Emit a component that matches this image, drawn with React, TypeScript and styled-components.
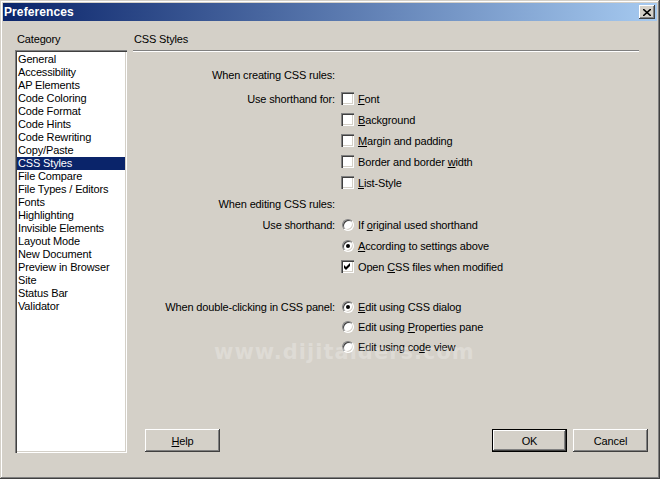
import styled, { createGlobalStyle } from "styled-components";

const GlobalStyle = createGlobalStyle`
    html, body {
        margin: 0;
        padding: 0;
        background: #d4d0c8;
    }
    * {
        box-sizing: border-box;
    }
`;

const categories = [
    "General",
    "Accessibility",
    "AP Elements",
    "Code Coloring",
    "Code Format",
    "Code Hints",
    "Code Rewriting",
    "Copy/Paste",
    "CSS Styles",
    "File Compare",
    "File Types / Editors",
    "Fonts",
    "Highlighting",
    "Invisible Elements",
    "Layout Mode",
    "New Document",
    "Preview in Browser",
    "Site",
    "Status Bar",
    "Validator",
];

const Check = ({ checked = false }: { checked?: boolean }) => (
    <CheckBox>
        {checked && (
            <svg width="7" height="7" viewBox="0 0 7 7">
                <path d="M0 2 L2 4 L6 0 L6 3 L2 7 L0 5 Z" fill="#000" />
            </svg>
        )}
    </CheckBox>
);

const Radio = ({ checked = false }: { checked?: boolean }) => (
    <RadioBox>{checked && <Dot />}</RadioBox>
);

const App = () => {
    return (
        <>
            <GlobalStyle />
            <Window>
                <TitleBar>
                    <span className="title">Preferences</span>
                    <CloseButton>
                        <svg width="8" height="7" viewBox="0 0 8 7">
                            <path d="M0 0 L8 7 M8 0 L0 7" stroke="#000" strokeWidth="1.6" />
                        </svg>
                    </CloseButton>
                </TitleBar>
                <Body>
                    <LeftColumn>
                        <Caption>Category</Caption>
                        <List>
                            {categories.map((c) => (
                                <ListItem key={c} $selected={c === "CSS Styles"}>
                                    {c}
                                </ListItem>
                            ))}
                        </List>
                    </LeftColumn>
                    <RightColumn>
                        <Caption $pad={1}>CSS Styles</Caption>
                        <Separator />
                        <Form>
                            <Row $gap={3}>
                                <Label>When creating CSS rules:</Label>
                            </Row>
                            <Row>
                                <Label>Use shorthand for:</Label>
                                <Option>
                                    <Check />
                                    <span><u>F</u>ont</span>
                                </Option>
                            </Row>
                            <Row>
                                <Label />
                                <Option>
                                    <Check />
                                    <span><u>B</u>ackground</span>
                                </Option>
                            </Row>
                            <Row>
                                <Label />
                                <Option>
                                    <Check />
                                    <span><u>M</u>argin and padding</span>
                                </Option>
                            </Row>
                            <Row>
                                <Label />
                                <Option>
                                    <Check />
                                    <span>Border and border <u>w</u>idth</span>
                                </Option>
                            </Row>
                            <Row>
                                <Label />
                                <Option>
                                    <Check />
                                    <span><u>L</u>ist-Style</span>
                                </Option>
                            </Row>
                            <Row>
                                <Label>When editing CSS rules:</Label>
                            </Row>
                            <Row>
                                <Label>Use shorthand:</Label>
                                <Option>
                                    <Radio />
                                    <span>If <u>o</u>riginal used shorthand</span>
                                </Option>
                            </Row>
                            <Row>
                                <Label />
                                <Option>
                                    <Radio checked />
                                    <span><u>A</u>ccording to settings above</span>
                                </Option>
                            </Row>
                            <Row $gap={20}>
                                <Label />
                                <Option>
                                    <Check checked />
                                    <span>Open <u>C</u>SS files when modified</span>
                                </Option>
                            </Row>
                            <Row $h={20}>
                                <Label>When double-clicking in CSS panel:</Label>
                                <Option>
                                    <Radio checked />
                                    <span><u>E</u>dit using CSS dialog</span>
                                </Option>
                            </Row>
                            <Row $h={20}>
                                <Label />
                                <Option>
                                    <Radio />
                                    <span>Edit using <u>P</u>roperties pane</span>
                                </Option>
                            </Row>
                            <Row $h={20}>
                                <Label />
                                <Option>
                                    <Radio />
                                    <span>Edit using co<u>d</u>e view</span>
                                </Option>
                            </Row>
                        </Form>
                        <Footer>
                            <Button className="help">
                                <u>H</u>elp
                            </Button>
                            <Button $default>OK</Button>
                            <Button>Cancel</Button>
                        </Footer>
                    </RightColumn>
                </Body>
                <Watermark>www.dijitalders.com</Watermark>
            </Window>
        </>
    );
};

const Window = styled.div`
    position: relative;
    width: 660px;
    height: 479px;
    display: flex;
    flex-direction: column;
    padding: 3px;
    background: #d4d0c8;
    font-family: "Liberation Sans", Arial, sans-serif;
    font-size: 11px;
    letter-spacing: -0.15px;
    color: #000;
    box-shadow: inset -1px -1px #404040, inset 1px 1px #d4d0c8,
        inset -2px -2px #808080, inset 2px 2px #ffffff;
    overflow: hidden;
`;

const TitleBar = styled.div`
    height: 18px;
    display: flex;
    align-items: center;
    justify-content: space-between;
    padding: 0 2px 0 1px;
    background: linear-gradient(to right, #0a246a, #a6caf0);
    .title {
        color: #fff;
        font-weight: bold;
        font-size: 12px;
        letter-spacing: 0.1px;
    }
`;

const CloseButton = styled.div`
    width: 16px;
    height: 14px;
    display: flex;
    align-items: center;
    justify-content: center;
    background: #d4d0c8;
    box-shadow: inset -1px -1px #404040, inset 1px 1px #ffffff,
        inset -2px -2px #808080;
`;

const Body = styled.div`
    flex: 1;
    display: flex;
    padding: 12px 9px 23px 12px;
`;

const LeftColumn = styled.div`
    width: 112px;
    display: flex;
    flex-direction: column;
`;

const Caption = styled.div<{ $pad?: number }>`
    height: 13px;
    line-height: 13px;
    padding-left: ${(p) => p.$pad ?? 2}px;
    white-space: nowrap;
`;

const List = styled.div`
    flex: 1;
    margin-top: 4px;
    padding: 3px 2px;
    background: #fff;
    box-shadow: inset 1px 1px #808080, inset 2px 2px #404040,
        inset -1px -1px #ffffff, inset -2px -2px #d4d0c8;
`;

const ListItem = styled.div<{ $selected?: boolean }>`
    height: 13px;
    line-height: 13px;
    padding-left: 1px;
    white-space: nowrap;
    background: ${(p) => (p.$selected ? "#0a246a" : "transparent")};
    color: ${(p) => (p.$selected ? "#fff" : "#000")};
`;

const RightColumn = styled.div`
    flex: 1;
    margin-left: 6px;
    display: flex;
    flex-direction: column;
`;

const Separator = styled.div`
    margin-top: 4px;
    margin-right: 9px;
    height: 2px;
    border-top: 1px solid #808080;
    border-bottom: 1px solid #ffffff;
`;

const Form = styled.div`
    margin-top: 12px;
    display: flex;
    flex-direction: column;
`;

const Row = styled.div<{ $gap?: number; $h?: number }>`
    height: ${(p) => p.$h ?? 21}px;
    margin-bottom: ${(p) => p.$gap ?? 0}px;
    display: grid;
    grid-template-columns: 202px 1fr;
    column-gap: 6px;
    align-items: center;
`;

const Label = styled.div`
    text-align: right;
    white-space: nowrap;
`;

const Option = styled.div`
    display: flex;
    align-items: center;
    gap: 4px;
    white-space: nowrap;
    u {
        text-decoration: underline;
        text-underline-offset: 1px;
    }
`;

const CheckBox = styled.div`
    width: 13px;
    height: 13px;
    flex: none;
    display: flex;
    align-items: center;
    justify-content: center;
    background: #fff;
    box-shadow: inset 1px 1px #808080, inset 2px 2px #404040,
        inset -1px -1px #ffffff, inset -2px -2px #d4d0c8;
`;

const RadioBox = styled.div`
    width: 12px;
    height: 12px;
    margin-left: 1px;
    flex: none;
    border-radius: 50%;
    display: flex;
    align-items: center;
    justify-content: center;
    background: #fff;
    border-top: 1px solid #808080;
    border-left: 1px solid #808080;
    border-right: 1px solid #ffffff;
    border-bottom: 1px solid #ffffff;
    box-shadow: inset 1px 1px #404040, inset -1px -1px #d4d0c8;
`;

const Dot = styled.div`
    width: 4px;
    height: 4px;
    border-radius: 50%;
    background: #000;
`;

const Footer = styled.div`
    margin-top: auto;
    margin-bottom: 1px;
    display: flex;
    gap: 6px;
    .help {
        margin-left: 12px;
        margin-right: auto;
    }
`;

const Button = styled.div<{ $default?: boolean }>`
    width: 75px;
    height: 23px;
    display: flex;
    align-items: center;
    justify-content: center;
    background: #d4d0c8;
    box-shadow: ${(p) =>
        p.$default
            ? "inset 0 0 0 1px #000, inset -2px -2px #404040, inset 2px 2px #ffffff, inset -3px -3px #808080"
            : "inset -1px -1px #404040, inset 1px 1px #ffffff, inset -2px -2px #808080"};
`;

const Watermark = styled.div`
    position: absolute;
    left: 214px;
    top: 340px;
    font-family: "DejaVu Sans", sans-serif;
    font-weight: bold;
    font-size: 21px;
    letter-spacing: 1px;
    color: rgba(255, 255, 255, 0.25);
    pointer-events: none;
`;

export default App;
